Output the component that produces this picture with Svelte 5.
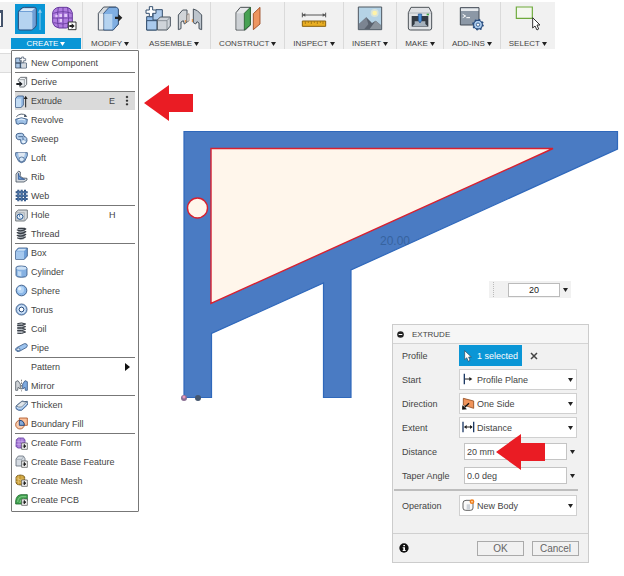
<script>
  const menuIcons = {
    component: '<path d="M2 6H16V21H2ZM2 21H16V36H2ZM16 21H34V36H16Z" fill="#a9c6e6" stroke="#36475e" stroke-width="2.4"/><path d="M20 22H33V35H20Z" fill="#d5d9de"/><path d="M20 3H26V8H32V14H26V20H20V14H14V8H20Z" fill="#fff" stroke="#36475e" stroke-width="2"/>',
    derive: '<path d="M10 17V10L17 4H35V25L28 33H14" fill="#eef1f4" stroke="#4d5359" stroke-width="2.4"/><path d="M12 11H28V31M28 11L34 5" fill="none" stroke="#777d84" stroke-width="2"/><path d="M4 21H13V15L23 24L13 32V27H4Z" fill="#1d2126"/>',
    extrude: '<path d="M2 10L8 3H25V30L19 37H2Z" fill="#9cc0e8" stroke="#31527f" stroke-width="2.4"/><path d="M3 11H18V36H3Z" fill="#c4dcf3"/><path d="M32 37V8" stroke="#222" stroke-width="3"/><path d="M26 12L32 2L38 12Z" fill="#222"/>',
    revolve: '<path d="M4 11Q18 -3 33 8" fill="none" stroke="#3e4c5e" stroke-width="2.6"/><path d="M29 3L37 11L27 12Z" fill="#3e4c5e"/><path d="M2 19Q19 10 37 19L35 32Q28 36 24 31H15Q11 36 4 32Z" fill="#9fc1e6" stroke="#31527f" stroke-width="2.6"/><path d="M9 21Q19 16 30 21" stroke="#e0edfa" stroke-width="4" fill="none"/>',
    sweep: '<path d="M3 12Q3 4 12 4H20Q28 5 27 14H31Q37 18 36 27Q34 36 24 36Q17 36 17 28V23H10Q3 22 3 12Z" fill="#b4d0ee" stroke="#31527f" stroke-width="2.6"/><path d="M10 14H24M24 16V25H31" fill="none" stroke="#31527f" stroke-width="2.4"/><circle cx="26" cy="29" r="5" fill="#e6f1fb"/>',
    loft: '<path d="M2 5H37V14L29 31Q19 39 11 31L2 14Z" fill="#9fc1e6" stroke="#31527f" stroke-width="2.4"/><path d="M9 5L12 18H27L31 5Z" fill="#dfe8f2"/><ellipse cx="20" cy="25" rx="8" ry="7" fill="#d9e9f8" stroke="#31527f" stroke-width="2"/>',
    rib: '<path d="M3 12L11 3L16 6V17Q18 23 25 24L36 25V30L27 36H3Z" fill="#d4d9df" stroke="#45505e" stroke-width="2.4"/><path d="M10 10Q12 24 29 28H10Z" fill="#6da0dd" stroke="#274f8c" stroke-width="2.4"/>',
    web: '<path d="M10 2V37M20 2V37M30 2V37M2 10H38M2 20H38M2 30H38" stroke="#274a78" stroke-width="6"/><path d="M10 4V36M20 4V36M30 4V36M4 10H36M4 20H36M4 30H36" stroke="#6b96cc" stroke-width="1.5"/>',
    hole: '<path d="M2 10L10 3H37V27L29 36H2Z" fill="#d5d9dd" stroke="#596066" stroke-width="2.4"/><path d="M3 11H28V35" fill="none" stroke="#9aa1a8" stroke-width="2"/><ellipse cx="15" cy="23" rx="9" ry="8" fill="#e6f0fa" stroke="#24558f" stroke-width="3"/><path d="M15 16Q9 23 19 28Q13 24 15 16Z" fill="#24558f"/>',
    thread: '<path d="M9 5Q19 0 31 5L28 36Q19 40 11 36Z" fill="#a6adb5"/><path d="M7 9Q19 15 32 6M7 17Q19 23 32 14M7 25Q19 31 32 22M8 33Q19 38 31 30M10 4H29" fill="none" stroke="#383e46" stroke-width="4" stroke-linecap="round"/>',
    box: '<path d="M2 12L10 3H37V27L28 37H2Z" fill="#6e9fd8" stroke="#31527f" stroke-width="2.4"/><path d="M3 13H27V36H3Z" fill="#a5c8ee"/><path d="M5 11L11 5H34L28 11Z" fill="#cfe3f7"/>',
    cylinder: '<path d="M3 9V31Q3 37 19 37T36 31V9Q36 3 19 3T3 9Z" fill="#86b1e2" stroke="#31527f" stroke-width="2.4"/><ellipse cx="19.500" cy="9.500" rx="15" ry="5" fill="#cde1f5"/><path d="M8 17Q13 20 19 19V34Q12 34 8 31Z" fill="#c2dbf4"/>',
    sphere: '<circle cx="19.500" cy="19.500" r="16" fill="#8bb7e8" stroke="#31527f" stroke-width="2.6"/><circle cx="17" cy="17" r="10" fill="#b5d5f5"/><circle cx="14" cy="14" r="5" fill="#e4f1fd"/>',
    torus: '<circle cx="19.500" cy="19.500" r="16.500" fill="#a5c5ea" stroke="#31527f" stroke-width="2.6"/><circle cx="19.500" cy="19.500" r="11" fill="none" stroke="#dceafa" stroke-width="3"/><circle cx="19.500" cy="19.500" r="7" fill="#fff" stroke="#31527f" stroke-width="3"/>',
    coil: '<path d="M7 5Q20 0 32 6Q20 12 7 10M7 10Q20 8 32 14Q20 20 7 18M7 18Q20 16 32 22Q20 28 7 26M7 26Q20 24 32 30Q20 37 7 34" fill="#b9bec4" stroke="#383e46" stroke-width="3"/>',
    pipe: '<path d="M5 20L28 8Q36 7 37 13Q37 18 33 20L13 31Q4 33 2 27Q1 23 5 20Z" fill="#9cc3ee" stroke="#31527f" stroke-width="2.4"/><ellipse cx="10" cy="25" rx="5" ry="4" fill="#e3effa" stroke="#31527f" stroke-width="2"/>',
    mirror: '<path d="M2 8L9 5L16 15V30L9 25L8 34H2Z" fill="#cfd3d7" stroke="#4f5962" stroke-width="2.4"/><path d="M37 8L30 5L23 15V30L30 25L31 34H37Z" fill="#7eaae0" stroke="#31527f" stroke-width="2.4"/><path d="M19.500 2V37" stroke="#444" stroke-width="2" stroke-dasharray="5 3"/>',
    thicken: '<path d="M3 21L21 6Q30 9 37 7V18L20 34Q9 36 3 29Z" fill="#8fb7e6" stroke="#31527f" stroke-width="2.4"/><path d="M4 21L21 7Q29 10 36 8L20 24Q11 26 4 21Z" fill="#e0e5ea" stroke="#526375" stroke-width="2"/><path d="M5 25Q12 30 20 27L36 12" stroke="#fff" stroke-width="2" fill="none"/>',
    boundary: '<path d="M13 3H37V25H13Z" fill="#fac09b" stroke="#a84c1b" stroke-width="2.4"/><circle cx="15" cy="23" r="13" fill="#f9cdb0" stroke="#a84c1b" stroke-width="2.4"/><path d="M13 10Q27 10 28 25H13Z" fill="#86abd9" stroke="#2a4c83" stroke-width="3"/>',
    form: '<path d="M4 8L10 3H25L30 8V28L25 33H8L3 28Z" fill="#a274d2" stroke="#59329a" stroke-width="2.4"/><path d="M4 13H29M4 22H29M12 4V32M21 4V32" stroke="#d9bff3" stroke-width="1.6"/>',
    base: '<path d="M3 12L10 3H25L30 11V33H3Z" fill="#d5dbe2" stroke="#606b76" stroke-width="2.4"/><path d="M4 13H20V32M20 13L26 5" fill="none" stroke="#8d97a2" stroke-width="2"/>',
    mesh: '<path d="M3 9Q5 3 16 3T29 9V27Q27 33 16 33T3 27Z" fill="#c79c35" stroke="#6b5116" stroke-width="2.4"/><path d="M3 14Q16 20 29 14M3 22Q16 29 29 22M11 4V32M21 4V32M4 9L27 27" fill="none" stroke="#ecd08b" stroke-width="1.500"/>',
    pcb: '<path d="M2 24Q4 6 18 5H37V23Q28 21 24 33H2Z" fill="#42a450" stroke="#1c6329" stroke-width="2.4"/><path d="M8 27Q9 13 20 11H34M14 30Q15 19 27 17" fill="none" stroke="#a3dca9" stroke-width="2"/>'
  };
  const badge = '<path d="M20 18H37V37H20Z" fill="#f7f7f7" stroke="#444" stroke-width="2"/><path d="M23 27.500H29M27 22L33 27.500L27 33Z" fill="#222" stroke="#222" stroke-width="2"/>';

  const groups = [
    [{ name: 'New Component', icon: 'component' }],
    [{ name: 'Derive', icon: 'derive' }],
    [
      { name: 'Extrude', icon: 'extrude', key: 'E', active: true },
      { name: 'Revolve', icon: 'revolve' },
      { name: 'Sweep', icon: 'sweep' },
      { name: 'Loft', icon: 'loft' },
      { name: 'Rib', icon: 'rib' },
      { name: 'Web', icon: 'web' }
    ],
    [{ name: 'Hole', icon: 'hole', key: 'H' }, { name: 'Thread', icon: 'thread' }],
    [
      { name: 'Box', icon: 'box' },
      { name: 'Cylinder', icon: 'cylinder' },
      { name: 'Sphere', icon: 'sphere' },
      { name: 'Torus', icon: 'torus' },
      { name: 'Coil', icon: 'coil' },
      { name: 'Pipe', icon: 'pipe' }
    ],
    [{ name: 'Pattern', sub: true }, { name: 'Mirror', icon: 'mirror' }],
    [{ name: 'Thicken', icon: 'thicken' }, { name: 'Boundary Fill', icon: 'boundary' }],
    [
      { name: 'Create Form', icon: 'form', badge: true },
      { name: 'Create Base Feature', icon: 'base', badge: true },
      { name: 'Create Mesh', icon: 'mesh', badge: true },
      { name: 'Create PCB', icon: 'pcb', badge: true }
    ]
  ];

  const toolIcons = {
    extrude: '<path d="M4 20Q4 15 8 12L15 6Q18 4 22 4H52Q58 4 58 10V56Q58 60 55 63L49 69Q46 72 42 72H8Q4 72 4 68Z" fill="#6f9fd6" stroke="#2d4b74" stroke-width="3"/><path d="M6 18H42Q46 18 46 22V70H10Q6 70 6 66Z" fill="#b5d3f0"/><path d="M9 15L18 7H53L45 15Z" fill="#d9e9f8"/><path d="M69 72V18" stroke="#8ecbed" stroke-width="3"/><path d="M63 20L69 9L75 20Z" fill="#8ecbed"/>',
    form: '<path d="M5 20Q8 6 24 4H48Q60 6 64 20V48Q60 62 46 66H24Q9 64 5 50Z" fill="#b07de0" stroke="#65399c" stroke-width="3"/><path d="M7 22Q34 12 62 22M5 36H64M7 50Q34 58 62 50M22 5Q15 34 22 65M36 4V66M50 6Q56 34 50 64" fill="none" stroke="#65399c" stroke-width="2.5"/><path d="M13 26H20V34H13ZM25 24H33V33H25ZM40 24H48V33H40ZM26 39H33V48H26Z" fill="#e2c9f8"/><path d="M52 48H75V71H52Z" fill="#fff" stroke="#333" stroke-width="3"/><path d="M55 57H62V52L71 60L62 68V63H55Z" fill="#222"/>',
    modify: '<path d="M4 22L20 3H56L64 10V55L48 72H4Z" fill="#d6dade" stroke="#4a545e" stroke-width="3"/><path d="M20 22L36 4H58Q64 5 64 11V54L49 72H20Z" fill="#7faee2" stroke="#2d4b74" stroke-width="2.5"/><path d="M22 24H46V70H22Z" fill="#b5d3f0"/><path d="M6 24H19V70H6Z" fill="#eef0f2"/><path d="M54 32H64V24L76 35L64 47V39H54Z" fill="#222"/>',
    assemble: '<path d="M5 32H34V72H5Z" fill="#8fb8e7" stroke="#35506f" stroke-width="3"/><path d="M24 20L33 11H52V33L43 42H24Z" fill="#aecbeb" stroke="#35506f" stroke-width="3"/><path d="M5 44H36V72H5Z" fill="#a9c9ec" stroke="#35506f" stroke-width="3"/><path d="M37 42L46 33H76V60L66 72H37Z" fill="#cfd4da" stroke="#4a545e" stroke-width="3"/><path d="M38 44H66V71M66 44L75 34" fill="none" stroke="#7b848d" stroke-width="2.500"/><path d="M13 2H23V12H33V22H23V32H13V22H3V12H13Z" fill="#fff" stroke="#35506f" stroke-width="3"/>',
    joint: '<path d="M4 27L17 12H30V48L22 54L19 44L12 48V68L4 71Z" fill="#d1d5d9" stroke="#4a545e" stroke-width="3"/><path d="M74 27L61 14L49 9V50L56 54L60 47L66 51V68L74 71Z" fill="#bdc5cd" stroke="#4a545e" stroke-width="3"/><path d="M30 27L36 23V45L30 48Z" fill="#eee" stroke="#7d6b5d" stroke-width="2"/><path d="M25 42V50M46 39V48" stroke="#e68b35" stroke-width="3"/>',
    construct: '<path d="M3 20L16 4H46V57L31 72H3Z" fill="#e5e7e9" stroke="#4b5054" stroke-width="3"/><path d="M5 22H27V70H5Z" fill="#cdd1d5"/><path d="M28 22L46 4V57L28 72Z" fill="#47a153" stroke="#225b2b" stroke-width="2.500"/><path d="M55 23L75 4V54L55 71Z" fill="#ee9560" stroke="#98441b" stroke-width="2.500"/>',
    inspect: '<path d="M4 27H74M4 20V34M74 20V34" stroke="#555" stroke-width="3" fill="none"/><path d="M4 27L13 22V32ZM74 27L65 22V32Z" fill="#555"/><path d="M4 45H74V61H4Z" fill="#e9ae22" stroke="#8a6210" stroke-width="3"/><path d="M13 46V54M22 46V51M31 46V54M40 46V51M49 46V54M58 46V51M66 46V54" stroke="#8a6210" stroke-width="2"/>',
    insert: '<path d="M4 3H74V71H4Z" fill="#b5d3e6" stroke="#4d565f" stroke-width="3"/><circle cx="53" cy="21" r="12" fill="#d7e3da"/><circle cx="53" cy="21" r="7" fill="#fff3a8"/><path d="M6 54L28 34L45 51L56 44L72 58V69H6Z" fill="#59616d"/><path d="M6 54L28 34L34 55L22 69H6Z" fill="#7b8491"/><path d="M38 69L56 44L72 58V69Z" fill="#8b949d"/>',
    make: '<path d="M12 4H66L74 20V66Q74 72 68 72H10Q4 72 4 66V20Z" fill="#dfe1e4" stroke="#4d5359" stroke-width="3"/><path d="M6 21H72" stroke="#9ba1a7" stroke-width="2"/><path d="M14 30H64V62H14Z" fill="#343b43"/><path d="M23 54V46H55V54L62 61H16Z" fill="#a6b1bc"/><path d="M34 24H44V43L39 51L34 43Z" fill="#4b91d9" stroke="#1f4f8f" stroke-width="2"/><path d="M59 23H66V28H59Z" fill="#43a849"/>',
    addins: '<path d="M4 5H60V57H4Z" fill="#8c98a6" stroke="#454d57" stroke-width="3"/><path d="M6 7H58V15H6Z" fill="#e7eaed"/><path d="M11 25L20 30L11 35M22 35H33" fill="none" stroke="#fff" stroke-width="3"/><circle cx="57" cy="56" r="13" fill="#cce0f6" stroke="#294e80" stroke-width="4"/><circle cx="57" cy="56" r="15" fill="none" stroke="#294e80" stroke-width="5" stroke-dasharray="5 6.780"/><circle cx="57" cy="56" r="10" fill="#a9ccf0"/><circle cx="57" cy="56" r="5" fill="#fff" stroke="#294e80" stroke-width="2.500"/>',
    select: '<path d="M4 3H52V37H4Z" fill="#f4f7ef" stroke="#6eaa3b" stroke-width="3.500"/><path d="M53 35V66L60 60L66 72L71 69L66 57H75Z" fill="#fff" stroke="#333" stroke-width="3"/>'
  };

  const tools = [
    { label: 'MODIFY', icons: ['modify'] },
    { label: 'ASSEMBLE', icons: ['assemble', 'joint'] },
    { label: 'CONSTRUCT', icons: ['construct'] },
    { label: 'INSPECT', icons: ['inspect'] },
    { label: 'INSERT', icons: ['insert'] },
    { label: 'MAKE', icons: ['make'] },
    { label: 'ADD-INS', icons: ['addins'] },
    { label: 'SELECT', icons: ['select'] }
  ];

  const fieldIcons = {
    start: '<path d="M7 2V34" stroke="#1d3a66" stroke-width="4"/><path d="M9 18H26" stroke="#222" stroke-width="3"/><path d="M22 12L31 18L22 24Z" fill="#222"/>',
    direction: '<path d="M4 4L35 12V34L4 24Z" fill="#f0945b" stroke="#8f4a1f" stroke-width="2.500"/><path d="M21 19L8 31" stroke="#111" stroke-width="4"/><path d="M2 26L1 37L13 36Z" fill="#111" stroke="#111" stroke-width="2"/>',
    extent: '<path d="M3 2V34M35 2V34" stroke="#1d3a66" stroke-width="4"/><path d="M8 18H30" stroke="#222" stroke-width="3"/><path d="M14 12L6 18L14 24ZM24 12L32 18L24 24Z" fill="#222"/>',
    body: '<path d="M3 12Q3 4 12 4H24Q33 4 33 12V27Q33 34 25 34H11Q3 34 3 27Z" fill="#fafafa" stroke="#444" stroke-width="2.500"/><path d="M14 16H24V32H14Z" fill="#cdd2d8"/><circle cx="30" cy="8" r="7" fill="#ef7d1a"/><circle cx="30" cy="8" r="2.500" fill="#ffe2b8"/>'
  };

  let distance = $state('20 mm');
  let taper = $state('0.0 deg');
  let quick = $state('20');
</script>

{#snippet caret()}
  <svg class="caret" viewBox="0 0 5 4" aria-hidden="true"><path d="M0 0H5L2.5 4Z" fill="currentColor" /></svg>
{/snippet}

{#snippet pointer()}
  <svg class="pointer" viewBox="0 0 49 36" aria-hidden="true"><path d="M0 18L25 0V9H49V27H25V36Z" fill="#ea1c24" /></svg>
{/snippet}

{#snippet choice(id, label, icon, value)}
  <div class="row">
    <label for={id}>{label}</label>
    <div class="choice">
      <svg viewBox="0 0 39 39" aria-hidden="true">{@html fieldIcons[icon]}</svg>
      <select {id}><option>{value}</option></select>
      {@render caret()}
    </div>
  </div>
{/snippet}

{#snippet measure(id, label)}
  <div class="row">
    <label for={id}>{label}</label>
    <div class="measure">
      {#if id === 'distance'}
        <input {id} type="text" bind:value={distance} />
        {@render pointer()}
      {:else}
        <input {id} type="text" bind:value={taper} />
      {/if}
      <button type="button" aria-label="{label} options">{@render caret()}</button>
    </div>
  </div>
{/snippet}

<div class="app">
  <header class="toolbar">
    <div class="edge"></div>
    <div class="tool create">
      <div class="icons">
        <button type="button" class="on" aria-label="Extrude"><svg viewBox="0 0 78 78">{@html toolIcons.extrude}</svg></button>
        <button type="button" aria-label="Create Form"><svg viewBox="0 0 78 78">{@html toolIcons.form}</svg></button>
      </div>
      <button type="button" class="title">CREATE {@render caret()}</button>
    </div>
    {#each tools as tool}
      <div class="tool">
        <div class="icons">
          {#each tool.icons as icon}
            <button type="button" aria-label={icon}><svg viewBox="0 0 78 78">{@html toolIcons[icon]}</svg></button>
          {/each}
        </div>
        <button type="button" class="title">{tool.label} {@render caret()}</button>
      </div>
    {/each}
  </header>

  <main>
    <div class="browser-tab"></div>

    <svg class="sketch" viewBox="175 120 449 290" role="img" aria-label="Sketch profile">
      <path d="M184 131.500H617.500V149L351 270V397.500H323.500V283L211.500 333.500V397.500H184Z" fill="#4a7bc3" stroke="#2f68bb" stroke-width="1.2" />
      <path d="M211 148.500H553L211 303.500Z" fill="#fff6eb" stroke="#d8202f" stroke-width="1.4" />
      <circle cx="197.500" cy="208" r="10" fill="#fff6eb" stroke="#d8202f" stroke-width="1.4" />
      <circle cx="184" cy="398" r="3" fill="#8a6f93" />
      <circle cx="184" cy="397" r="1.500" fill="#e89ac0" />
      <circle cx="198" cy="398" r="3" fill="#44566f" />
      <text x="380" y="245" font-size="12" fill="#37639f">20.00</text>
    </svg>

    <nav class="menu" aria-label="Create">
      {#each groups as group}
        <ul>
          {#each group as item}
            <li>
              <button type="button" class:active={item.active}>
                <svg viewBox="0 0 39 39" aria-hidden="true">
                  {#if item.icon}{@html menuIcons[item.icon]}{/if}
                  {#if item.badge}{@html badge}{/if}
                </svg>
                <span class="name">{item.name}</span>
                {#if item.key}<span class="key">{item.key}</span>{/if}
                <span class="end">
                  {#if item.active}
                    <svg viewBox="0 0 12 36"><path d="M4 4H8V8H4ZM4 15H8V19H4ZM4 26H8V30H4Z" fill="#222" stroke="#222" stroke-width="2" /></svg>
                  {:else if item.sub}
                    <svg viewBox="0 0 15 24" class="more"><path d="M0 0L15 12L0 24Z" fill="#111" /></svg>
                  {/if}
                </span>
              </button>
            </li>
          {/each}
        </ul>
      {/each}
    </nav>
    <div class="hint">{@render pointer()}</div>

    <div class="quick">
      <span class="grip"></span>
      <input type="text" aria-label="Distance value" bind:value={quick} />
      <button type="button" aria-label="Value options">{@render caret()}</button>
    </div>

    <form class="dialog" onsubmit={(e) => e.preventDefault()}>
      <h2>
        <svg viewBox="0 0 21 21" aria-hidden="true"><circle cx="10.500" cy="10.500" r="10" fill="#222" /><path d="M5 10.500H16" stroke="#fff" stroke-width="3" /></svg>
        EXTRUDE
      </h2>
      <div class="fields">
        <div class="row">
          <label for="profile">Profile</label>
          <button type="button" id="profile" class="picked">
            <svg viewBox="0 0 24 36" aria-hidden="true"><path d="M2 2V29L8 23L13 34L18 31L14 21H22Z" fill="#fff" stroke="#345" stroke-width="2" /></svg>
            1 selected
          </button>
          <button type="button" class="clear" aria-label="Clear selection">
            <svg viewBox="0 0 24 24"><path d="M3 3L21 21M21 3L3 21" stroke="#444" stroke-width="4.500" /></svg>
          </button>
        </div>
        {@render choice('start', 'Start', 'start', 'Profile Plane')}
        {@render choice('direction', 'Direction', 'direction', 'One Side')}
        {@render choice('extent', 'Extent', 'extent', 'Distance')}
        {@render measure('distance', 'Distance')}
        {@render measure('taper', 'Taper Angle')}
      </div>
      <hr />
      <div class="fields last">
        {@render choice('operation', 'Operation', 'body', 'New Body')}
      </div>
      <footer>
        <svg viewBox="0 0 30 30" aria-hidden="true"><circle cx="15" cy="15" r="14" fill="#111" /><path d="M13 6H18V10H13ZM11 13H18V21H20V24H11V21H13V16H11Z" fill="#fff" /></svg>
        <button type="submit">OK</button>
        <button type="button">Cancel</button>
      </footer>
    </form>
  </main>
</div>

<style>
  :global(body) {
    margin: 0;
    background: #fff;
  }
  .app {
    display: flex;
    flex-direction: column;
    min-height: 100vh;
    overflow: hidden;
    font-family: "Liberation Sans", Arial, sans-serif;
    font-size: 9px;
    color: #444;
  }
  .app * {
    box-sizing: border-box;
  }
  button,
  input,
  select {
    margin: 0;
    padding: 0;
    border: 0;
    background: none;
    font: inherit;
    color: inherit;
    border-radius: 0;
  }
  svg {
    display: block;
    flex: none;
  }
  .caret {
    width: 5px;
    height: 4px;
    color: #222;
  }

  .toolbar {
    display: flex;
    align-self: flex-start;
    height: 47px;
    margin-top: 2px;
    background: #f1f1f1;
  }
  .edge {
    width: 3px;
    height: 17px;
    margin: 8px 8px 0 0;
    border: solid #44536b;
    border-width: 3px 2px 1px 0;
    background: #fff;
  }
  .tool {
    display: flex;
    flex-direction: column;
    align-items: center;
    gap: 4px;
    padding: 2px 8px 0;
    border-right: 1px solid #dadada;
  }
  .icons {
    display: flex;
    gap: 6px;
    margin: 0 -1px;
  }
  .icons button {
    display: grid;
    place-items: center;
    width: 26px;
    height: 30px;
  }
  .icons svg {
    width: 26px;
    height: 26px;
  }
  .icons .on {
    width: 30px;
    background: #0a96d6;
  }
  .title {
    display: flex;
    align-items: center;
    gap: 2px;
    height: 12px;
    font-size: 8px;
    white-space: nowrap;
  }
  .create {
    width: 72px;
    padding: 2px 1px 0 0;
  }
  .tool:last-child {
    border: 0;
  }
  .create .title {
    justify-content: center;
    width: 100%;
    background: #0a96d6;
    color: #fff;
  }
  .create .caret {
    color: #fff;
  }

  main {
    position: relative;
    flex: 1;
    min-height: 527px;
  }
  .browser-tab {
    width: 11px;
    height: 20px;
    margin-top: 4px;
    border: solid #dcdcdc;
    border-width: 1px 0;
    background: #f3f3f3;
  }
  .sketch {
    position: absolute;
    left: 175px;
    top: 71px;
    width: 449px;
    height: 290px;
  }

  .menu {
    position: absolute;
    left: 11px;
    top: 1px;
    width: 128px;
    padding: 2px 3px;
    border: 1px solid #777;
    border-radius: 1px;
    background: #fff;
  }
  ul {
    margin: 0;
    padding: 0;
    list-style: none;
  }
  .menu li {
    height: 19px;
  }
  .menu ul + ul li:first-child {
    border-top: 1px solid #777;
  }
  .menu button {
    display: flex;
    align-items: center;
    width: 100%;
    height: 100%;
    text-align: left;
  }
  .menu .active {
    background: #dadada;
  }
  .menu svg {
    width: 13px;
    height: 13px;
  }
  .name {
    flex: 1;
    padding-left: 3px;
    white-space: nowrap;
  }
  .key {
    width: 10px;
  }
  .end {
    display: flex;
    justify-content: center;
    width: 16px;
  }
  .end svg {
    width: 4px;
    height: 12px;
  }
  .end .more {
    width: 5px;
    height: 8px;
  }
  .pointer {
    width: 49px;
    height: 36px;
  }
  .hint {
    position: absolute;
    left: 144px;
    top: 36px;
  }

  .quick {
    position: absolute;
    left: 489px;
    top: 232px;
    display: flex;
    align-items: center;
    height: 17px;
    padding-left: 4px;
    background: #f1f1f1;
  }
  .grip {
    width: 2px;
    height: 15px;
    margin-right: 13px;
    border-left: 1px dotted #bbb;
  }
  .quick input {
    width: 52px;
    height: 14px;
    border: 1px solid #bbb;
    background: #fff;
    text-align: center;
    color: #222;
  }
  .quick button {
    display: grid;
    place-items: center;
    width: 11px;
    height: 14px;
  }

  .dialog {
    position: absolute;
    left: 392px;
    top: 275px;
    width: 197px;
    border: 1px solid #ccc;
    background: #f1f1f1;
  }
  h2 {
    display: flex;
    align-items: center;
    gap: 8px;
    height: 19px;
    margin: 0;
    padding-left: 4px;
    border-bottom: 1px solid #d4d4d4;
    background: #f6f6f6;
    font-size: 8px;
    font-weight: 400;
  }
  h2 svg {
    width: 7px;
    height: 7px;
  }
  .fields {
    display: flex;
    flex-direction: column;
    gap: 3px;
    padding: 1px 11px 3px 9px;
  }
  .row {
    display: flex;
    align-items: center;
    height: 21px;
  }
  label {
    flex: none;
    width: 57px;
    white-space: nowrap;
  }
  .picked {
    display: flex;
    align-items: center;
    gap: 5px;
    height: 21px;
    padding: 0 4px 0 5px;
    background: #0a96d6;
    color: #fff;
    white-space: nowrap;
  }
  .picked svg {
    width: 8px;
    height: 12px;
  }
  .clear {
    margin-left: 8px;
  }
  .clear svg {
    width: 8px;
    height: 8px;
  }
  .choice {
    display: flex;
    flex: 1;
    align-items: center;
    height: 21px;
    padding: 0 3px 0 2px;
    border: 1px solid #d0d0d0;
    background: #fff;
  }
  .choice svg:first-child {
    width: 13px;
    height: 13px;
  }
  select {
    flex: 1;
    min-width: 0;
    padding-left: 2px;
    appearance: none;
  }
  .measure {
    position: relative;
    display: flex;
    flex: 1;
    min-width: 0;
    align-items: center;
    padding-left: 5px;
  }
  .measure input {
    flex: 1;
    min-width: 0;
    height: 17px;
    padding-left: 2px;
    border: 1px solid #c4c4c4;
    background: #fff;
  }
  .measure button {
    display: grid;
    flex: none;
    justify-content: end;
    align-items: center;
    width: 10px;
    height: 17px;
    padding-right: 2px;
  }
  .measure .pointer {
    position: absolute;
    z-index: 1;
    left: 37px;
    top: -9px;
  }
  hr {
    height: 2px;
    margin: 0 10px 0 1px;
    border: 0;
    background: #bdbdbd;
  }
  .last {
    padding: 4px 11px 17px 9px;
  }
  footer {
    display: flex;
    align-items: center;
    gap: 8px;
    height: 29px;
    padding: 0 9px 0 6px;
    border-top: 1px solid #d0d0d0;
  }
  footer svg {
    width: 10px;
    height: 10px;
    margin-right: auto;
  }
  footer button {
    width: 47px;
    height: 15px;
    border: 1px solid #aaa;
    font-size: 10px;
    color: #666;
  }
</style>
